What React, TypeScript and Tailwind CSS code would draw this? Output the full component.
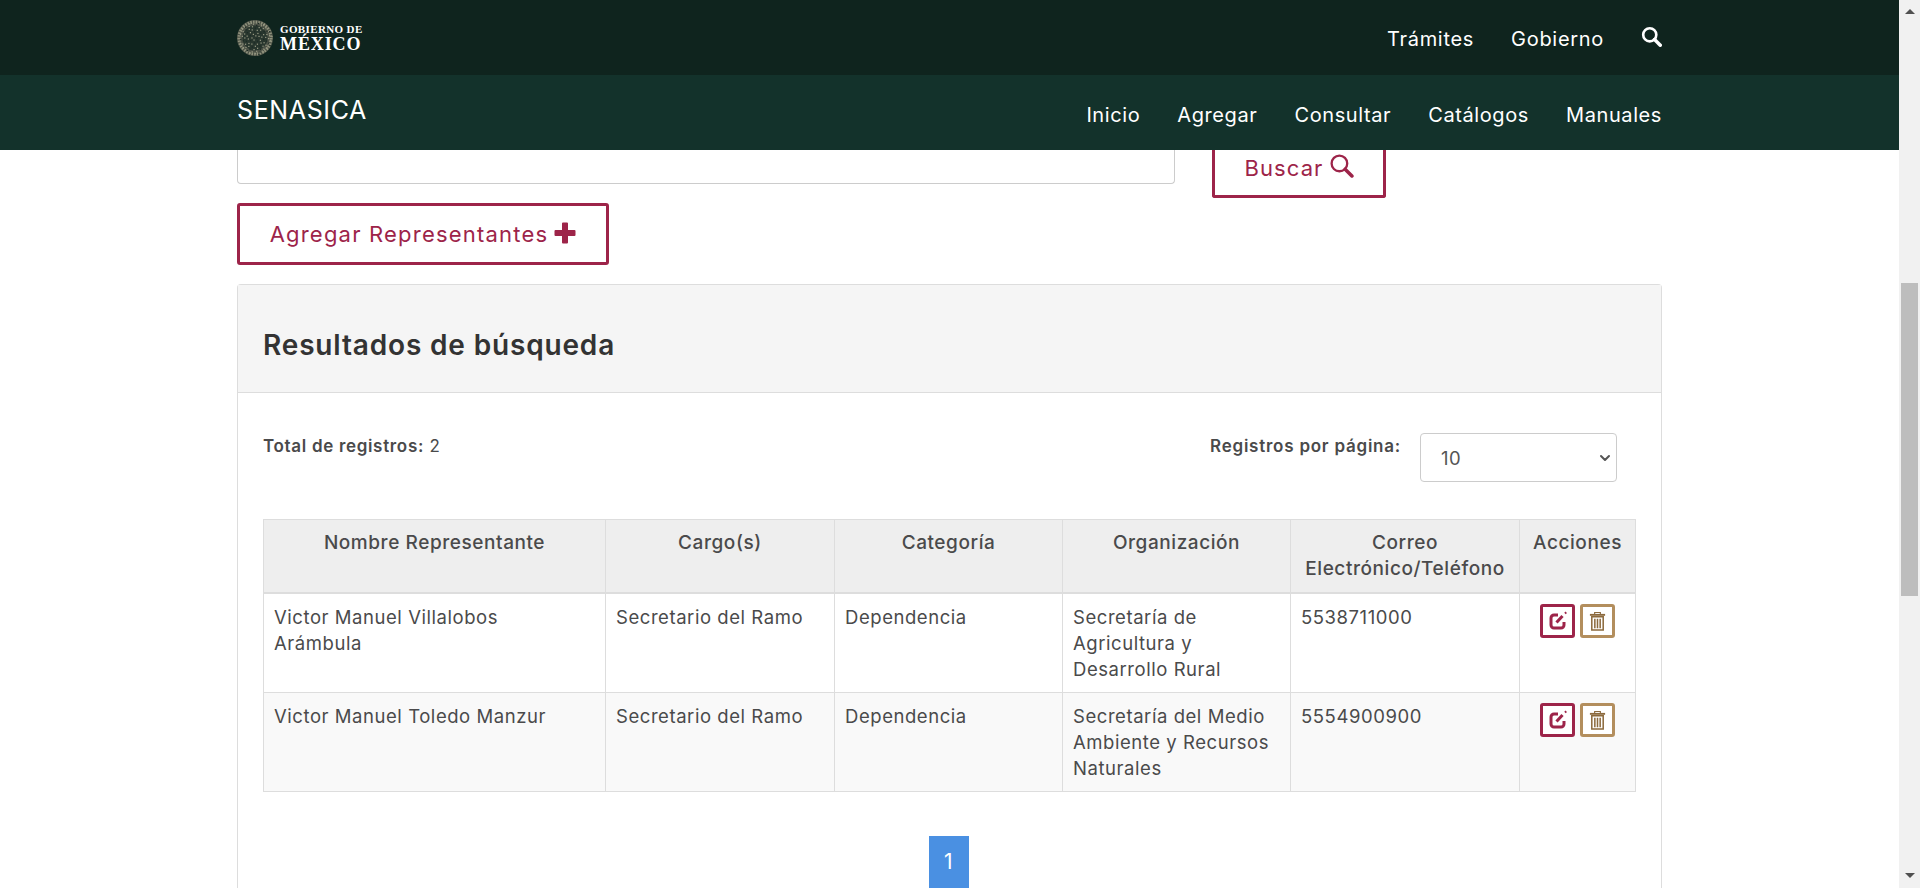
import { ChevronDown } from "lucide-react";

const rows = [
  {
    nombre: "Victor Manuel Villalobos Arámbula",
    org: "Secretaría de Agricultura y Desarrollo Rural",
    tel: "5538711000",
    stripe: false,
  },
  {
    nombre: "Victor Manuel Toledo Manzur",
    org: "Secretaría del Medio Ambiente y Recursos Naturales",
    tel: "5554900900",
    stripe: true,
  },
];

// speckle for the coat of arms, it reads as noise at this size
const specks = Array.from({ length: 90 }, (_, i) => {
  const a = i * 2.399;
  const r = 16.5 * Math.sqrt((i + 0.5) / 90);
  return { x: 18 + r * Math.cos(a), y: 18 + r * Math.sin(a), light: i % 3 !== 0 };
});

function SearchIcon({ className, thick }: { className: string; thick?: boolean }) {
  return (
    <svg aria-hidden="true" viewBox="0 0 24 24" className={className} fill="none" stroke="currentColor">
      <circle cx="10" cy="10" r="7.5" strokeWidth={thick ? 3 : 2.2} />
      <path d="M15.5 15.5 22 22" strokeWidth={thick ? 4 : 3.4} strokeLinecap="round" />
    </svg>
  );
}

function Emblem() {
  return (
    <svg aria-hidden="true" viewBox="0 0 36 36" className="h-9 w-9 shrink-0">
      <circle cx="18" cy="18" r="18" fill="#4b5146" />
      <circle cx="18" cy="18" r="16" fill="none" stroke="#8f917c" strokeWidth="3" strokeDasharray="1.500 1.200" />
      <circle cx="18" cy="18" r="12.500" fill="#28362e" />
      {specks.map((s, i) => (
        <rect key={i} x={s.x} y={s.y} width="1.200" height="1.200" fill={s.light ? "#9b9d86" : "#1b2a24"} />
      ))}
    </svg>
  );
}

function ActionButtons() {
  return (
    <div className="flex justify-end gap-[5px] pr-[20px]">
      <button
        type="button"
        className="grid h-[34px] w-[35px] place-items-center rounded-[3px] border-[3px] border-[#9d2449] bg-white text-[#9d2449]"
      >
        <svg aria-hidden="true" viewBox="0 0 20 20" className="h-[20px] w-[20px]" fill="none" stroke="currentColor">
          <path d="M10 4H6A3 3 0 0 0 3 7v7a3 3 0 0 0 3 3h7a3 3 0 0 0 3-3v-3" strokeWidth="3" />
          <path d="M8.500 11.500 14.500 5" strokeWidth="3" />
          <path d="M17 2.500l1.200-1.200" strokeWidth="2" />
        </svg>
      </button>
      <button
        type="button"
        className="grid h-[34px] w-[35px] place-items-center rounded-[3px] border-[3px] border-[#b38e5d] bg-white text-[#8c6a3d]"
      >
        <svg aria-hidden="true" viewBox="0 0 20 22" className="h-[21px] w-[19px]" fill="none" stroke="currentColor">
          <path d="M7 3V1.500h6V3" strokeWidth="1.200" />
          <path d="M2 4h16" strokeWidth="2" />
          <path d="M4 6h12v14H4z" strokeWidth="1.600" />
          <path d="M7.200 8v10M10 8v10M12.800 8v10" strokeWidth="1.600" />
        </svg>
      </button>
    </div>
  );
}

export default function App() {
  return (
    <div className="flex h-[888px] w-full overflow-hidden bg-white font-['Inter',sans-serif] text-[18.5px] leading-[26px] tracking-[0.03em] text-[#4a4a4b]">
      <div className="flex min-w-0 flex-1 flex-col">
        <header className="text-white">
          <div className="h-[75px] bg-[#0f241e]">
            <div className="mx-auto flex h-full w-[1425px] items-center justify-between">
              <div className="flex items-center gap-[7px]">
                <Emblem />
                <div className="font-['Liberation_Serif',serif] font-bold tracking-[0.02em]">
                  <div className="text-[11px] leading-[13px]">GOBIERNO DE</div>
                  <div className="text-[18px] leading-[17px] tracking-[0.05em]">MÉXICO</div>
                </div>
              </div>
              <nav className="flex items-center gap-[37px] text-[20px] tracking-[0.035em]">
                <a className="mt-[2px]">Trámites</a>
                <a className="mt-[2px]">Gobierno</a>
                <SearchIcon thick className="mb-[2px] h-[21px] w-[21px]" />
              </nav>
            </div>
          </div>
          <div className="h-[75px] bg-[#13322b]">
            <div className="mx-auto flex h-full w-[1425px] justify-between">
              <span className="pt-[20px] text-[25px] leading-[30px] tracking-[0.025em]">SENASICA</span>
              <nav className="flex gap-[37px] pt-[27px] text-[20px] tracking-[0.03em]">
                <a>Inicio</a>
                <a>Agregar</a>
                <a>Consultar</a>
                <a>Catálogos</a>
                <a>Manuales</a>
              </nav>
            </div>
          </div>
        </header>

        <main className="mx-auto w-[1425px] flex-1 overflow-hidden">
          <div className="flex items-start gap-[37px]">
            <div className="h-[34px] w-[938px] rounded-b-[4px] border border-t-0 border-[#cccccc]" />
            <button
              type="button"
              className="flex h-[48px] w-[174px] items-center justify-center gap-[5px] rounded-b-[3px] border-[3px] border-t-0 border-[#9d2449] pb-[12px] pt-[2px] text-[22px] tracking-[0.05em] text-[#9d2449]"
            >
              Buscar
              <SearchIcon className="mb-[5px] h-[25px] w-[25px]" />
            </button>
          </div>

          <button
            type="button"
            className="mt-[5px] flex h-[62px] w-[372px] items-center justify-center gap-[6px] rounded-[3px] border-[3px] border-[#9d2449] text-[22px] tracking-[0.055em] text-[#9d2449]"
          >
            Agregar Representantes
            <svg aria-hidden="true" viewBox="0 0 22 22" className="mb-[2px] h-[22px] w-[22px]" fill="currentColor">
              <path d="M8 1.500a1 1 0 0 1 1-1h4a1 1 0 0 1 1 1V8h6.500a1 1 0 0 1 1 1v4a1 1 0 0 1-1 1H14v6.500a1 1 0 0 1-1 1H9a1 1 0 0 1-1-1V14H1.500a1 1 0 0 1-1-1V9a1 1 0 0 1 1-1H8z" />
            </svg>
          </button>

          <section className="mt-[19px] rounded-t-[4px] border border-b-0 border-[#dddddd] pb-[200px]">
            <div className="flex h-[108px] items-center border-b border-[#dddddd] bg-[#f5f5f5] px-[25px] pt-[13px]">
              <h2 className="text-[28px] font-semibold leading-[34px] tracking-[0.03em] text-[#333333]">Resultados de búsqueda</h2>
            </div>

            <div className="pl-[25px] pr-[27px]">
              <div className="flex items-start justify-between pr-[17px] pt-[40px]">
                <p className="text-[17px] tracking-[0.04em]">
                  <strong className="font-semibold">Total de registros:</strong> 2
                </p>
                <div className="flex items-start gap-[19px]">
                  <strong className="text-[17px] font-semibold tracking-[0.045em]">Registros por página:</strong>
                  <div className="flex h-[49px] w-[197px] items-center justify-between rounded-[4px] border border-[#cccccc] pl-[20px] pr-[3px] text-[#555555]">
                    10
                    <ChevronDown size={16} strokeWidth={3} />
                  </div>
                </div>
              </div>

              <table className="mt-[37px] w-full table-fixed border-collapse">
                <colgroup>
                  <col className="w-[342px]" />
                  <col className="w-[229px]" />
                  <col className="w-[228px]" />
                  <col className="w-[228px]" />
                  <col className="w-[229px]" />
                  <col className="w-[116px]" />
                </colgroup>
                <thead className="bg-[#eeeeee]">
                  <tr className="h-[73px]">
                    {["Nombre Representante", "Cargo(s)", "Categoría", "Organización", "Correo Electrónico/Teléfono", "Acciones"].map((h) => (
                      <th key={h} className="border border-b-2 border-[#dddddd] p-[10px] align-top text-[19px] font-medium tracking-[0.03em]">
                        {h}
                      </th>
                    ))}
                  </tr>
                </thead>
                <tbody>
                  {rows.map((r) => (
                    <tr key={r.tel} className={r.stripe ? "bg-[#f9f9f9]" : "bg-white"}>
                      <td className="border border-[#dddddd] py-[10px] pl-[10px] pr-[40px] align-top">{r.nombre}</td>
                      <td className="border border-[#dddddd] p-[10px] align-top">Secretario del Ramo</td>
                      <td className="border border-[#dddddd] p-[10px] align-top">Dependencia</td>
                      <td className="border border-[#dddddd] p-[10px] align-top">{r.org}</td>
                      <td className="border border-[#dddddd] p-[10px] align-top">{r.tel}</td>
                      <td className="border border-[#dddddd] p-0 pt-[10px] align-top">
                        <ActionButtons />
                      </td>
                    </tr>
                  ))}
                </tbody>
              </table>

              <div className="mt-[44px] flex justify-center">
                <a className="grid h-[52px] w-[40px] place-items-center bg-[#4a90e2] text-[21px] text-white">1</a>
              </div>
            </div>
          </section>
        </main>
      </div>

      <aside className="flex h-full w-[21px] shrink-0 flex-col items-center bg-[#f1f1f1]">
        <div className="mt-[9px] h-0 w-0 border-x-[5px] border-b-[5px] border-x-transparent border-b-[#505050]" />
        <div className="mt-[269px] h-[313px] w-[17px] bg-[#bdbdbd]" />
        <div className="mt-[277px] h-0 w-0 border-x-[5px] border-t-[5px] border-x-transparent border-t-[#505050]" />
      </aside>
    </div>
  );
}
